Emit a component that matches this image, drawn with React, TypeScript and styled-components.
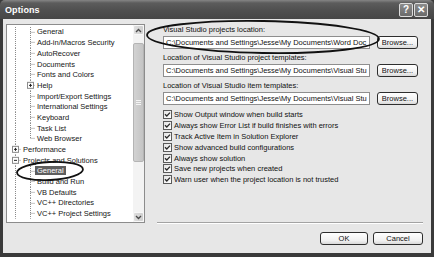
import React from 'react';
import styled, { createGlobalStyle } from 'styled-components';

const FONT = `"Liberation Sans", Arial, sans-serif`;
const ROW_H = 10.7;

const GlobalStyle = createGlobalStyle`
  html, body {
    margin: 0;
    padding: 0;
    background: #ffffff;
  }

  body {
    font-family: ${FONT};
    font-size: 7.5px;
    color: #111111;
  }
`;

const Window = styled.div`
  position: relative;
  width: 434px;
  height: 257px;
  display: flex;
  flex-direction: column;
  background: #3a3a3a;
  overflow: hidden;
`;

const TitleBar = styled.div`
  flex: none;
  height: 19px;
  display: flex;
  align-items: center;
  padding: 0 6px 0 5px;
  background: linear-gradient(#858585 0, #5c5c5c 3px, #4f4f4f 55%, #464646 100%);
  border-radius: 5px 5px 0 0;
`;

const Title = styled.div`
  flex: 1;
  color: #ffffff;
  font-weight: bold;
  font-size: 9px;
  letter-spacing: 0.1px;
`;

const CaptionButton = styled.div`
  width: 12px;
  height: 12px;
  margin-left: 1px;
  display: flex;
  align-items: center;
  justify-content: center;
  border: 1px solid #dcdcdc;
  border-radius: 2px;
  background: linear-gradient(#8c8c8c, #6a6a6a);
  color: #ffffff;
  font-weight: bold;
  font-size: 10px;
  line-height: 1;
`;

const Body = styled.div`
  flex: 1;
  display: flex;
  flex-direction: column;
  margin: 0 3px 4px 3px;
  padding: 5px 8px 0 3px;
  background: #e7e7e7;
`;

const Main = styled.div`
  display: flex;
  align-items: flex-start;
  height: 200px;
`;

const Tree = styled.div`
  flex: none;
  width: 139px;
  height: 199px;
  box-sizing: border-box;
  display: flex;
  border: 1px solid #8c8c8c;
  background: #ffffff;
`;

const TreeList = styled.div`
  flex: 1;
  padding-top: 1.6px;
  overflow: hidden;
`;

const TreeRow = styled.div`
  display: flex;
  align-items: center;
  height: ${ROW_H}px;
  white-space: nowrap;
`;

const TreeLabel = styled.span<{ selected?: boolean }>`
  padding: 0 2px;
  line-height: 9px;
  background: ${({ selected }) => (selected ? '#5e5e5e' : 'transparent')};
  color: ${({ selected }) => (selected ? '#ffffff' : '#161616')};
`;

const ScrollBar = styled.div`
  flex: none;
  width: 11px;
  display: flex;
  flex-direction: column;
  background: #f3f3f3;
`;

const ScrollButton = styled.div`
  height: 10px;
  display: flex;
  align-items: center;
  justify-content: center;
  background: linear-gradient(90deg, #dedede, #cfcfcf);
  border: 1px solid #f8f8f8;
  box-sizing: border-box;
  border-radius: 2px;
`;

const ScrollTrack = styled.div`
  flex: 1;
  display: flex;
  flex-direction: column;
  padding-top: 8px;
  padding-bottom: 50px;
`;

const ScrollThumb = styled.div`
  flex: 1;
  display: flex;
  align-items: center;
  justify-content: center;
  background: linear-gradient(90deg, #d2d2d2, #c4c4c4);
  border: 1px solid #b4b4b4;
  border-radius: 2px;
`;

const RightPane = styled.div`
  flex: none;
  width: 266px;
  height: 200px;
  margin-left: 12px;
  display: flex;
  flex-direction: column;
`;

const Fields = styled.div`
  padding: 1px 0 0 6px;
`;

const FieldGroup = styled.div`
  margin-bottom: 4px;
`;

const FieldLabel = styled.div`
  height: 10px;
  line-height: 10px;
  margin-bottom: 1px;
`;

const FieldRow = styled.div`
  display: flex;
  align-items: center;
  gap: 7px;
`;

const TextBox = styled.div`
  width: 207px;
  height: 13px;
  box-sizing: border-box;
  border: 1px solid #8e8e8e;
  background: #ffffff;
  padding: 0 2px;
  line-height: 11px;
  white-space: nowrap;
  overflow: hidden;
`;

const Button = styled.div<{ w: number }>`
  width: ${({ w }) => w}px;
  height: 13px;
  box-sizing: border-box;
  display: flex;
  align-items: center;
  justify-content: center;
  border: 1px solid #2e2e2e;
  border-radius: 3px;
  background: linear-gradient(#ffffff, #f0f0f0 70%, #d8d8d8);
  color: #111111;
`;

const Checks = styled.div`
  margin-top: 4.6px;
`;

const CheckRow = styled.div`
  display: flex;
  align-items: center;
  height: 10.8px;
  gap: 2px;
  white-space: nowrap;
`;

const CheckBox = styled.div`
  width: 9px;
  height: 9px;
  box-sizing: border-box;
  display: flex;
  align-items: center;
  justify-content: center;
  border: 1px solid #5a5a5a;
  background: linear-gradient(135deg, #e4e4e4, #ffffff);
`;

const Separator = styled.div`
  margin-top: auto;
  height: 0;
  border-top: 1px solid #a3a3a3;
  border-bottom: 1px solid #ffffff;
`;

const Footer = styled.div`
  display: flex;
  justify-content: flex-end;
  gap: 5px;
  margin-top: 8px;
`;

const Annotations = styled.svg`
  position: absolute;
  left: 0;
  top: 0;
  pointer-events: none;
`;

type TreeNode = {
  label: string;
  level: 0 | 1;
  box?: 'plus' | 'minus';
  last?: boolean;
  selected?: boolean;
};

const NODES: TreeNode[] = [
  { label: 'General', level: 1 },
  { label: 'Add-in/Macros Security', level: 1 },
  { label: 'AutoRecover', level: 1 },
  { label: 'Documents', level: 1 },
  { label: 'Fonts and Colors', level: 1 },
  { label: 'Help', level: 1, box: 'plus' },
  { label: 'Import/Export Settings', level: 1 },
  { label: 'International Settings', level: 1 },
  { label: 'Keyboard', level: 1 },
  { label: 'Task List', level: 1 },
  { label: 'Web Browser', level: 1, last: true },
  { label: 'Performance', level: 0, box: 'plus' },
  { label: 'Projects and Solutions', level: 0, box: 'minus' },
  { label: 'General', level: 1, selected: true },
  { label: 'Build and Run', level: 1 },
  { label: 'VB Defaults', level: 1 },
  { label: 'VC++ Directories', level: 1 },
  { label: 'VC++ Project Settings', level: 1 },
];

// only the part of each path that fits in its box is shown
const FIELDS = [
  { label: 'Visual Studio projects location:', value: 'C:\\Documents and Settings\\Jesse\\My Documents\\Word Doc' },
  { label: 'Location of Visual Studio project templates:', value: 'C:\\Documents and Settings\\Jesse\\My Documents\\Visual Stu' },
  { label: 'Location of Visual Studio item templates:', value: 'C:\\Documents and Settings\\Jesse\\My Documents\\Visual Stu' },
];

const CHECKS = [
  'Show Output window when build starts',
  'Always show Error List if build finishes with errors',
  'Track Active Item in Solution Explorer',
  'Show advanced build configurations',
  'Always show solution',
  'Save new projects when created',
  'Warn user when the project location is not trusted',
];

const LINE = '#8a8a8a';

function ExpandBox({ cx, cy, open }: { cx: number; cy: number; open: boolean }) {
  return (
    <g>
      <rect x={cx - 3} y={cy - 3} width={6} height={6} fill="#ffffff" stroke="#8c8c8c" strokeWidth={1} />
      <line x1={cx - 1.5} y1={cy} x2={cx + 1.5} y2={cy} stroke="#222" strokeWidth={1} />
      {!open && <line x1={cx} y1={cy - 1.5} x2={cx} y2={cy + 1.5} stroke="#222" strokeWidth={1} />}
    </g>
  );
}

function Connector({ node }: { node: TreeNode }) {
  const mid = ROW_H / 2;
  const dots = { stroke: LINE, strokeWidth: 1, strokeDasharray: '1 1' };

  if (node.level === 0) {
    return (
      <svg width={14} height={ROW_H} style={{ flex: 'none' }}>
        <line x1={8.5} y1={0} x2={8.5} y2={ROW_H} {...dots} />
        <line x1={11.5} y1={mid} x2={14} y2={mid} {...dots} />
        <ExpandBox cx={8.5} cy={mid} open={node.box === 'minus'} />
      </svg>
    );
  }

  return (
    <svg width={28} height={ROW_H} style={{ flex: 'none' }}>
      <line x1={8.5} y1={0} x2={8.5} y2={ROW_H} {...dots} />
      <line x1={23.5} y1={0} x2={23.5} y2={node.last ? mid : ROW_H} {...dots} />
      <line x1={23.5} y1={mid} x2={28} y2={mid} {...dots} />
      {node.box && <ExpandBox cx={23.5} cy={mid} open={node.box === 'minus'} />}
    </svg>
  );
}

function Chevron({ up }: { up: boolean }) {
  return (
    <svg width={7} height={5} viewBox="0 0 7 5">
      <path d={up ? 'M1 4 L3.5 1.5 L6 4' : 'M1 1 L3.5 3.5 L6 1'} fill="none" stroke="#4a4a4a" strokeWidth={1.3} />
    </svg>
  );
}

function Grip() {
  return (
    <svg width={5} height={5} viewBox="0 0 5 5">
      <path d="M0 0.5 H5 M0 2.5 H5 M0 4.5 H5" stroke="#f4f4f4" strokeWidth={1} />
    </svg>
  );
}

function Check() {
  return (
    <svg width={7} height={7} viewBox="0 0 7 7">
      <path d="M1 3.2 L2.8 5 L6 1.6" fill="none" stroke="#2a2a2a" strokeWidth={1.3} />
    </svg>
  );
}

export default function App(): React.ReactElement {
  return (
    <>
      <GlobalStyle />
      <Window>
        <TitleBar>
          <Title>Options</Title>
          <CaptionButton>?</CaptionButton>
          <CaptionButton>✕</CaptionButton>
        </TitleBar>
        <Body>
          <Main>
            <Tree>
              <TreeList>
                {NODES.map((node, i) => (
                  <TreeRow key={i}>
                    <Connector node={node} />
                    <TreeLabel selected={node.selected}>{node.label}</TreeLabel>
                  </TreeRow>
                ))}
              </TreeList>
              <ScrollBar>
                <ScrollButton>
                  <Chevron up />
                </ScrollButton>
                <ScrollTrack>
                  <ScrollThumb>
                    <Grip />
                  </ScrollThumb>
                </ScrollTrack>
                <ScrollButton>
                  <Chevron up={false} />
                </ScrollButton>
              </ScrollBar>
            </Tree>
            <RightPane>
              <Fields>
                {FIELDS.map((field) => (
                  <FieldGroup key={field.label}>
                    <FieldLabel>{field.label}</FieldLabel>
                    <FieldRow>
                      <TextBox>{field.value}</TextBox>
                      <Button w={41}>Browse...</Button>
                    </FieldRow>
                  </FieldGroup>
                ))}
                <Checks>
                  {CHECKS.map((text) => (
                    <CheckRow key={text}>
                      <CheckBox>
                        <Check />
                      </CheckBox>
                      {text}
                    </CheckRow>
                  ))}
                </Checks>
              </Fields>
              <Separator />
            </RightPane>
          </Main>
          <Footer>
            <Button w={48}>OK</Button>
            <Button w={50}>Cancel</Button>
          </Footer>
        </Body>
        <Annotations width={434} height={257} viewBox="0 0 434 257">
          <ellipse cx={50} cy={171} rx={33} ry={9} transform="rotate(-3 50 171)" fill="none" stroke="#111" strokeWidth={1.8} />
          <ellipse cx={263} cy={37} rx={116} ry={16} transform="rotate(1 263 37)" fill="none" stroke="#111" strokeWidth={1.8} />
        </Annotations>
      </Window>
    </>
  );
}
